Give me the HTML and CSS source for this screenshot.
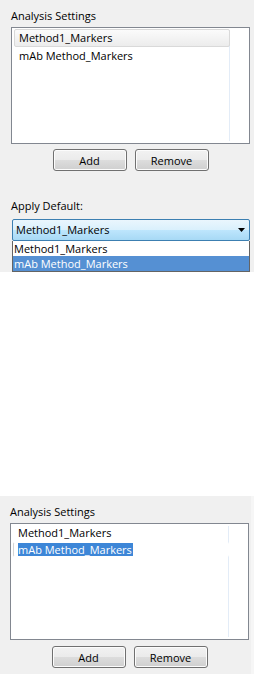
FILE: index.html
```html
<html>

<head>
    <link rel="stylesheet" href="styles.css">
</head>

<body>

    <div class="panel">
        <div class="caption">Analysis Settings</div>
        <div class="listbox">
            <div class="item hot">Method1_Markers</div>
            <div class="item">mAb Method_Markers</div>
        </div>
        <div class="buttons">
            <button class="btn">Add</button>
            <button class="btn">Remove</button>
        </div>

        <div class="caption caption_apply">Apply Default:</div>
        <div class="combo">
            <span class="combo_text">Method1_Markers</span>
            <svg class="arrow" width="7" height="4" viewBox="0 0 7 4"><polygon points="0,0 7,0 3.5,4" fill="#000"/></svg>
        </div>
        <div class="dropdown">
            <div class="option">Method1_Markers</div>
            <div class="option selected">mAb Method_Markers</div>
        </div>
    </div>

    <div class="panel panel_bottom">
        <div class="caption">Analysis Settings</div>
        <div class="listbox listbox_bottom">
            <div class="item">Method1_Markers</div>
            <div class="item current"><span class="sel_text">mAb Method_Markers</span></div>
        </div>
        <div class="buttons buttons_bottom">
            <button class="btn">Add</button>
            <button class="btn">Remove</button>
        </div>
    </div>

</body>

</html>
```

FILE: styles.css
```css
body {
    margin: 0;
    background-color: white;
    font-family: "Open Sans", "Noto Sans", sans-serif;
    font-size: 11px;
    color: black;
}

.panel {
    width: 254px;
    box-sizing: border-box;
    background-color: #f0f0f0;
    padding: 8px 4px 0 11px;
}

.panel_bottom {
    margin-top: 224px;
    padding: 8px 2px 6px 10px;
    border-right: 3px solid #f6f6f6;
}

.caption {
    line-height: 15px;
    margin-bottom: 4px;
}

.caption_apply {
    margin-top: 27px;
    margin-bottom: 6px;
}

.listbox {
    height: 117px;
    box-sizing: border-box;
    border: 1px solid #828790;
    background-color: white;
    padding: 1px 0 0 2px;
    background-image: linear-gradient(to right, transparent 217px, #e3ecf7 217px, #e3ecf7 218px, transparent 218px);
    background-repeat: no-repeat;
    background-position: 0 2px;
    background-size: 100% calc(100% - 4px);
}

.listbox_bottom {
    padding-top: 0;
}

.item {
    width: 216px;
    box-sizing: border-box;
    border: 1px solid transparent;
    border-radius: 2px;
    line-height: 16px;
    padding-left: 4px;
    white-space: nowrap;
}

.item.hot {
    border-color: #d9d9d9;
    background: linear-gradient(#fbfbfb, #ececec);
}

.item.current {
    background-color: white;
    border-left-color: #d4d4d4;
}

.sel_text {
    display: inline-block;
    line-height: 13px;
    background-color: #3d86d7;
    color: white;
    padding-right: 1px;
}

.buttons {
    display: flex;
    justify-content: center;
    gap: 8px;
    margin-top: 5px;
}

.buttons_bottom {
    margin-top: 6px;
}

.btn {
    width: 74px;
    height: 22px;
    padding: 0;
    border: 1px solid #707070;
    border-radius: 3px;
    box-shadow: inset 0 0 0 1px #fcfcfc;
    background: linear-gradient(#f2f2f2 0%, #ebebeb 50%, #dddddd 50%, #cfcfcf 100%);
    font-family: "Open Sans", "Noto Sans", sans-serif;
    font-size: 11px;
    color: black;
    line-height: 15px;
}

.combo {
    display: flex;
    align-items: center;
    height: 22px;
    box-sizing: border-box;
    margin-left: 1px;
    border: 1px solid #3c7fb1;
    border-radius: 2px;
    background: linear-gradient(#eaf6fd 0%, #d9f0fc 50%, #bee6fd 50%, #a7d9f5 100%);
    padding: 0 4px 0 3px;
    line-height: 20px;
}

.combo_text {
    flex: 1;
}

.dropdown {
    margin-left: 1px;
    border: 1px solid #646464;
    border-top: none;
    background-color: white;
}

.option {
    height: 15px;
    line-height: 15px;
    padding-left: 1px;
}

.option.selected {
    background-color: #5590d3;
    color: white;
}
```
